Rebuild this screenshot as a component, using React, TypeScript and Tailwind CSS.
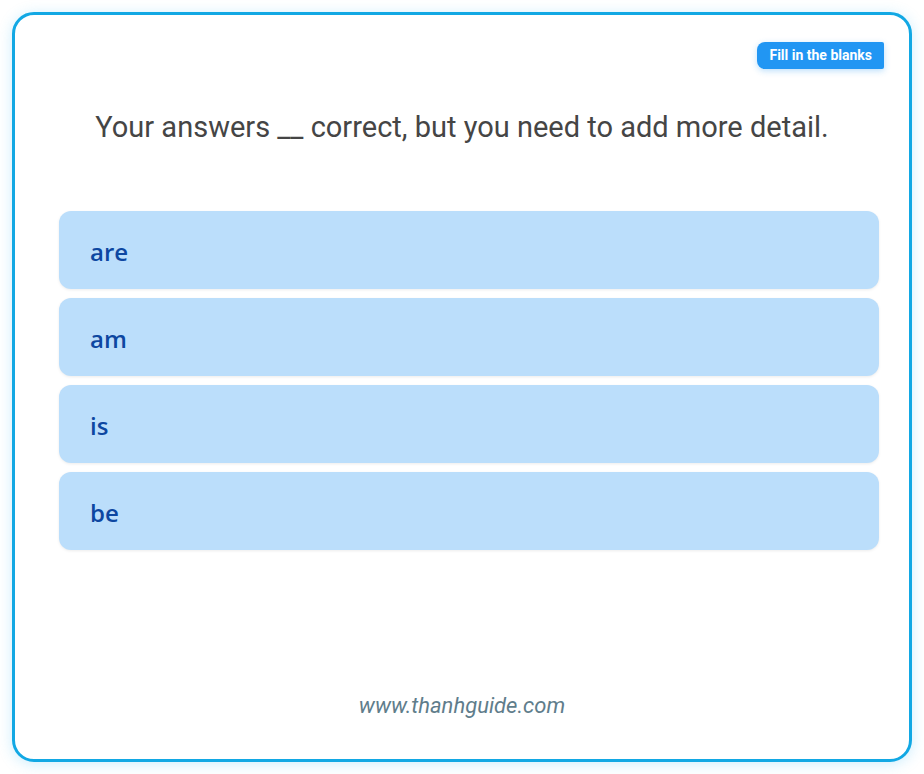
const options = ["are", "am", "is", "be"];

export default function App() {
  return (
    <div className="w-[924px] h-[774px] bg-white p-[12px]">
      <div className="relative flex flex-col w-[900px] h-[750px] rounded-[22px] border-[3px] border-[#12a8e4] bg-white shadow-[0_2px_14px_rgba(56,189,248,0.25)]">
        {/* badge */}
        <div className="absolute top-[27px] right-[25px] h-[27px] px-[12px] flex items-center rounded-l-[8px] rounded-r-[2px] bg-[#2196f3] text-white text-[14px] font-bold shadow-[0_2px_6px_rgba(33,150,243,0.3)] font-['Roboto',sans-serif]">
          Fill in the blanks
        </div>

        <h1 className="pt-[95px] text-center text-[29px] leading-[34px] text-[#454545] font-['Roboto',sans-serif]">
          Your answers __ correct, but you need to add more detail.
        </h1>

        <div className="mt-[67px] ml-[44px] mr-[30px] flex flex-col gap-[9px]">
          {options.map((o) => (
            <div
              key={o}
              className="h-[78px] flex items-center pl-[31px] pt-[3px] rounded-[12px] bg-[#bbdefb] shadow-[0_1px_3px_rgba(0,0,0,0.08)] text-[24px] font-semibold text-[#0d47a1] font-['Open_Sans',sans-serif]"
            >
              {o}
            </div>
          ))}
        </div>

        <div className="mt-auto pb-[39px] text-center text-[22px] leading-[28px] italic text-[#607d8b] font-['Roboto',sans-serif]">
          www.thanhguide.com
        </div>
      </div>
    </div>
  );
}
